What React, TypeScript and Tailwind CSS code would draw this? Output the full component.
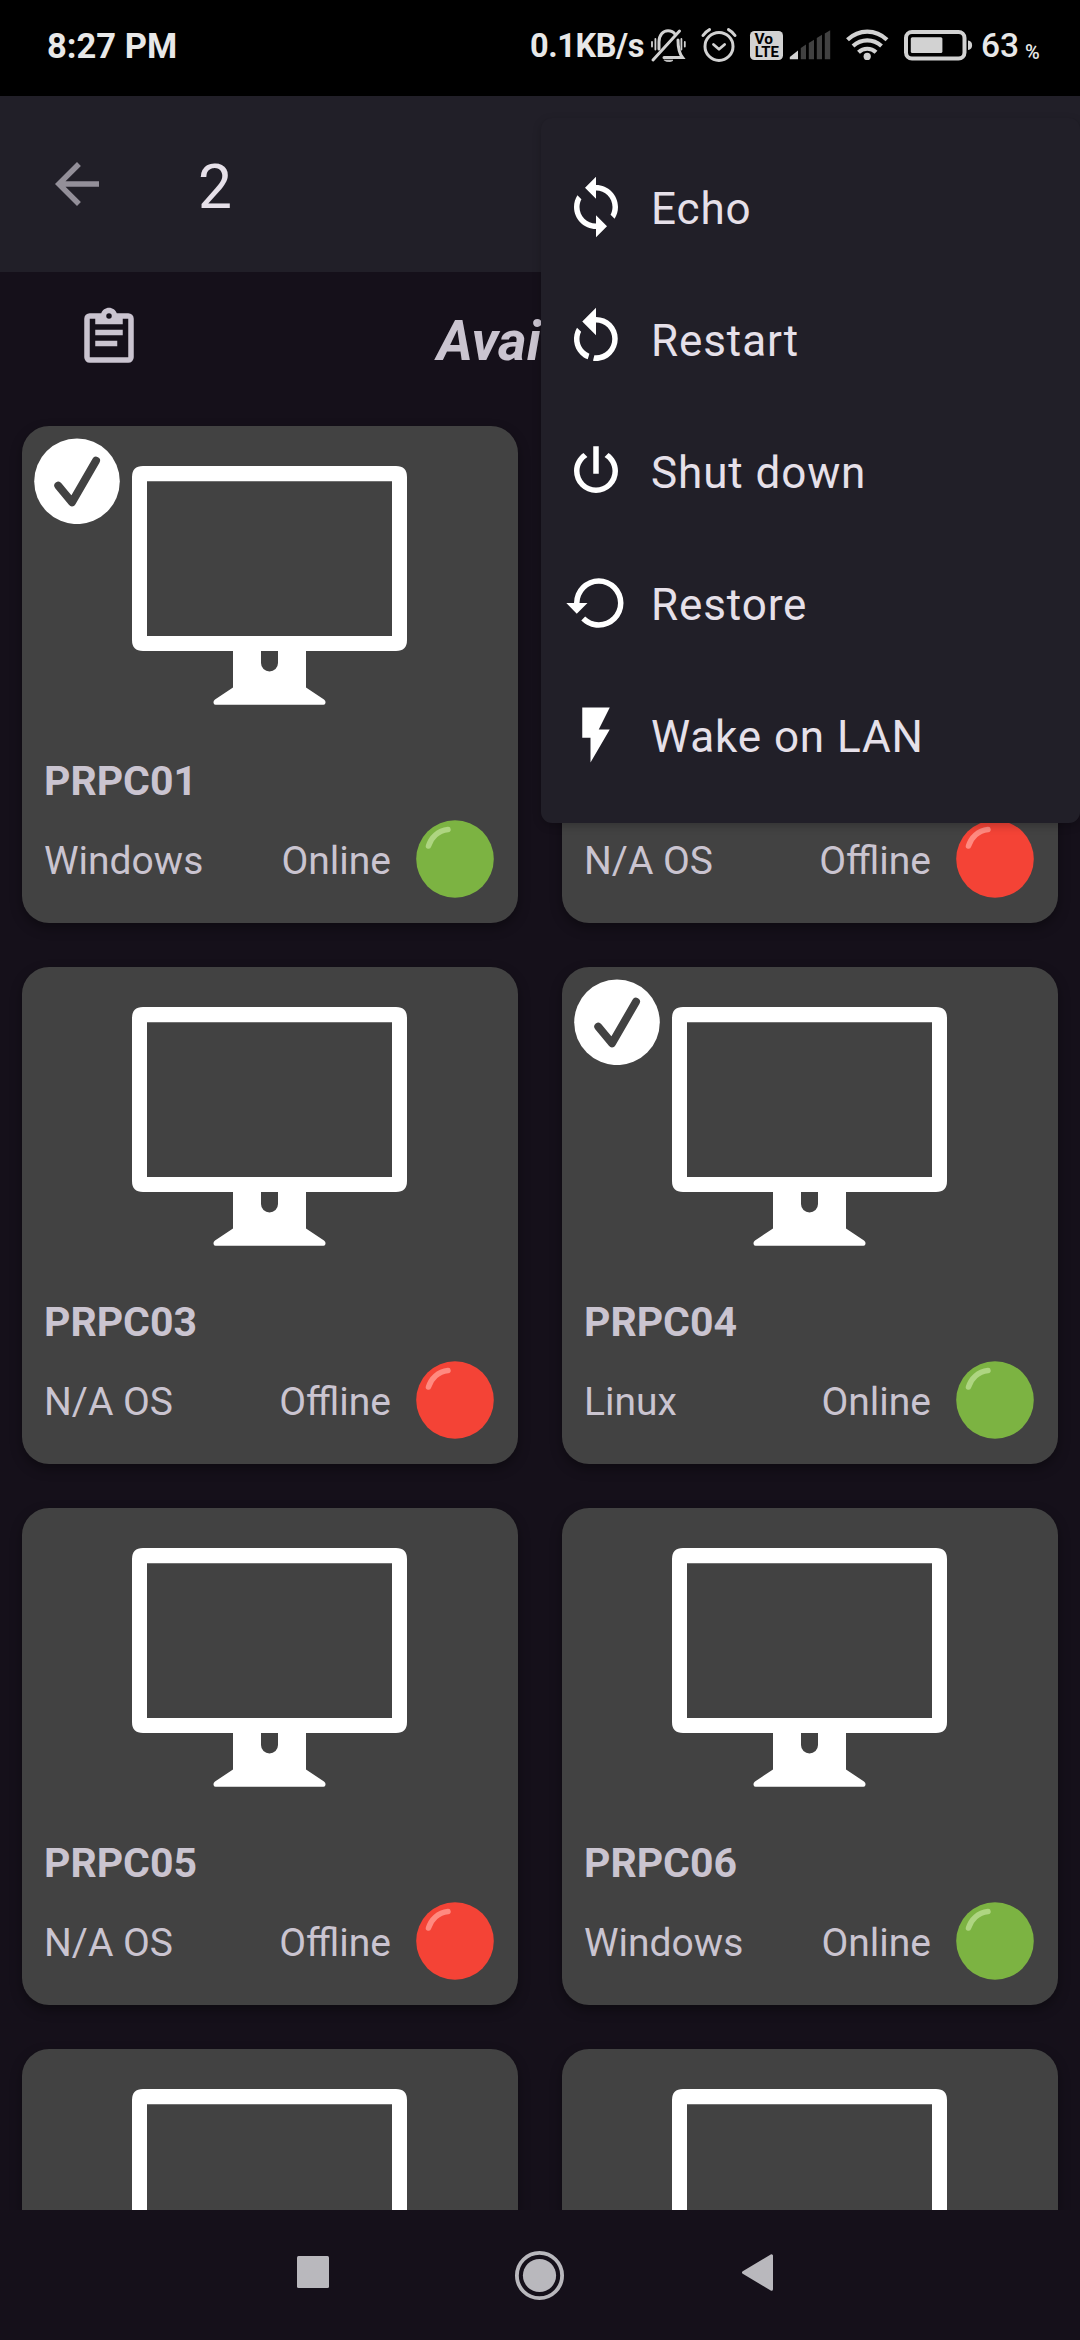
type Computer = {
  id: number;
  selected?: boolean;
  details?: { name: string; os: string; online: boolean };
};

const computers: Computer[] = [
  { id: 1, selected: true, details: { name: "PRPC01", os: "Windows", online: true } },
  { id: 2, details: { name: "PRPC02", os: "N/A OS", online: false } },
  { id: 3, details: { name: "PRPC03", os: "N/A OS", online: false } },
  { id: 4, selected: true, details: { name: "PRPC04", os: "Linux", online: true } },
  { id: 5, details: { name: "PRPC05", os: "N/A OS", online: false } },
  { id: 6, details: { name: "PRPC06", os: "Windows", online: true } },
  { id: 7 },
  { id: 8 },
];

const icons = {
  back: "M20 11H7.83l5.59-5.59L12 4l-8 8 8 8 1.41-1.41L7.83 13H20v-2z",
  clipboard:
    "M19,3H14.82C14.4,1.84 13.3,1 12,1C10.7,1 9.6,1.84 9.18,3H5A2,2 0 0,0 3,5V19A2,2 0 0,0 5,21H19A2,2 0 0,0 21,19V5A2,2 0 0,0 19,3M12,3A1,1 0 0,1 13,4A1,1 0 0,1 12,5A1,1 0 0,1 11,4A1,1 0 0,1 12,3M7,7H17V5H19V19H5V5H7V7M17,11H7V9H17V11M15,15H7V13H15V15Z",
  sync: "M12 4V1L8 5l4 4V6c3.31 0 6 2.69 6 6 0 1.01-.25 1.97-.7 2.8l1.46 1.46C19.54 15.03 20 13.57 20 12c0-4.42-3.58-8-8-8zm0 14c-3.31 0-6-2.69-6-6 0-1.01.25-1.97.7-2.8L5.24 7.74C4.46 8.97 4 10.43 4 12c0 4.42 3.58 8 8 8v3l4-4-4-4v3z",
  restart:
    "M12,4C14.1,4 16.1,4.8 17.6,6.3C20.7,9.4 20.7,14.5 17.6,17.6C15.8,19.5 13.3,20.2 10.9,19.9L11.4,17.9C13.1,18.1 14.9,17.5 16.2,16.2C18.5,13.9 18.5,10.1 16.2,7.7C15.1,6.6 13.5,6 12,6V10.6L7,5.6L12,0.6V4M6.3,17.6C3.7,15 3.3,11 5.1,7.9L6.6,9.4C5.5,11.6 5.9,14.4 7.8,16.2C8.3,16.7 8.9,17.1 9.6,17.4L9,19.4C8,19 7.1,18.4 6.3,17.6Z",
  power:
    "M16.56,5.44L15.11,6.89C16.84,7.94 18,9.83 18,12A6,6 0 0,1 12,18A6,6 0 0,1 6,12C6,9.83 7.16,7.94 8.88,6.88L7.44,5.44C5.36,6.88 4,9.28 4,12A8,8 0 0,0 12,20A8,8 0 0,0 20,12C20,9.28 18.64,6.88 16.56,5.44M13,3H11V13H13",
  restore:
    "M13,3A9,9 0 0,0 4,12H1.2L5,15.9L8.9,12H6A7,7 0 0,1 13,5A7,7 0 0,1 20,12A7,7 0 0,1 13,19C11.07,19 9.32,18.21 8.06,16.94L6.64,18.36C8.27,20 10.5,21 13,21A9,9 0 0,0 22,12A9,9 0 0,0 13,3Z",
  flash: "M7,2V13H10V22L17,10H13L17,2H7Z",
};

const menuItems = [
  { label: "Echo", icon: icons.sync },
  { label: "Restart", icon: icons.restart },
  { label: "Shut down", icon: icons.power },
  { label: "Restore", icon: icons.restore },
  { label: "Wake on LAN", icon: icons.flash },
];

function Icon({ path, className }: { path: string; className?: string }) {
  return (
    <svg viewBox="0 0 24 24" className={`size-[66px] shrink-0 fill-current ${className ?? ""}`}>
      <path d={path} />
    </svg>
  );
}

function StatusIcons() {
  return (
    <svg width="328" height="96" viewBox="648 0 328 96" className="shrink-0" fill="none" stroke="#d2d2d2">
      {/* muted bell */}
      <g strokeWidth="3" strokeLinecap="round">
        <path d="M659 49V42C659 35 663 30.800 668 30.800C671 30.800 673.500 32 675 34.200" />
        <path d="M678 40C678 48 679 53 682.500 57.500H664" />
        <path d="M679.500 31L653 60" />
        <path d="M652 42V46.500M655.400 39V49.500M681.400 39V49.500M684.800 42V46.500" strokeWidth="1.800" />
        <path d="M664.500 60.200H673C672 62 665.500 62 664.500 60.200Z" fill="#d2d2d2" strokeWidth="0.800" />
      </g>
      {/* alarm clock */}
      <circle cx="719" cy="46.400" r="14" strokeWidth="3" />
      <path d="M713.500 44.500L719 49.200L724.600 44.500" strokeWidth="2.800" strokeLinecap="round" strokeLinejoin="round" />
      <path d="M703 35.500C704.500 33 707 31 709.500 29.600M735 35.500C733.500 33 731 31 728.500 29.600" strokeWidth="3" strokeLinecap="round" />
      {/* volte badge */}
      <rect x="750" y="31" width="33" height="29" rx="4.500" fill="#d2d2d2" stroke="none" />
      <g fill="#000" stroke="none" fontFamily="Roboto" fontWeight="700" fontSize="14">
        <text x="754.600" y="43.800" textLength="18.500" lengthAdjust="spacingAndGlyphs">Vo</text>
        <text x="754.800" y="56.800" textLength="24" lengthAdjust="spacingAndGlyphs">LTE</text>
      </g>
      {/* signal */}
      <g stroke="none" fill="#414141">
        <path d="M789.800 59.300V57L798 50.600V59.300Z" fill="#d2d2d2" />
        <path d="M800.800 59.300V48L806 44.500V59.300Z" />
        <path d="M808.800 59.300V43L814 39.800V59.300Z" />
        <path d="M816.800 59.300V38L822 34.800V59.300Z" />
        <path d="M824.800 59.300V33.500L830.200 30.200V59.300Z" />
      </g>
      {/* wifi */}
      <g strokeWidth="4.200">
        <path d="M847.500 39.800C859 29 875.500 29 887 39.800" />
        <path d="M853 46C861.500 38.600 873 38.600 881.500 46" />
        <path d="M858.500 52.200C863.500 47.600 871 47.600 876 52.200" />
        <circle cx="867.200" cy="56.400" r="3.600" fill="#d2d2d2" stroke="none" />
      </g>
      {/* battery */}
      <rect x="906" y="32" width="58.500" height="26.500" rx="6" strokeWidth="4" />
      <rect x="910.800" y="37.200" width="31.600" height="15.800" rx="1.500" fill="#d2d2d2" stroke="none" />
      <path d="M968 40.500C973.500 40.500 973.500 50 968 50Z" fill="#d2d2d2" stroke="none" />
    </svg>
  );
}

function StatusBar() {
  return (
    <div className="flex h-24 shrink-0 items-center bg-black pl-[47px] text-[#e8e8e8]">
      <span className="mb-1 w-[483px] text-[34.5px] font-bold leading-none">8:27 PM</span>
      <span className="mb-1 w-[118px] whitespace-nowrap text-[32.5px] font-bold leading-none tracking-[-0.4px]">
        0.1KB/s
      </span>
      <StatusIcons />
      <span className="mb-1 ml-[5px] w-[44px] text-[33.5px] font-medium leading-none">63</span>
      <span className="mt-2 text-[20px] font-medium leading-none">%</span>
    </div>
  );
}

function Monitor() {
  return (
    <svg width="496" height="285" viewBox="0 0 496 285" className="shrink-0">
      <path
        fill="#fff"
        fillRule="evenodd"
        d="M121 40H374Q385 40 385 51V214Q385 225 374 225H284V261.500L302 273.500Q303.500 274.500 303.500 276V276.500Q303.500 278.800 301.500 278.800H193.500Q191.500 278.800 191.500 276.500V276Q191.500 274.500 193 273.500L211 261.500V225H121Q110 225 110 214V51Q110 40 121 40ZM125 55.300V210H370V55.300ZM239 225V237A8.500 8.500 0 0 0 256 237V225Z"
      />
    </svg>
  );
}

function StatusDot({ online }: { online: boolean }) {
  return (
    <svg width="78" height="78" viewBox="0 0 78 78" className="shrink-0">
      <circle cx="39" cy="39" r="38.800" className={online ? "fill-[#7cb342]" : "fill-[#f44336]"} />
      <path
        d="M12.500 26C15 17.500 22 10.500 32 9.500"
        fill="none"
        strokeWidth="5.500"
        strokeLinecap="round"
        className={online ? "stroke-[#aed581]" : "stroke-[#ff8a80]"}
      />
    </svg>
  );
}

function ComputerCard({ selected, details }: Computer) {
  return (
    <article className="relative flex h-[497px] w-[496px] flex-col rounded-[27px] bg-[#424242] text-[#cac4d0] shadow-[0_5px_12px_rgba(0,0,0,0.35)]">
      {selected && (
        <svg width="86" height="86" viewBox="0 0 86 86" className="absolute left-3 top-3">
          <circle cx="43" cy="43.300" r="42.800" fill="#fff" />
          <path
            d="M24.300 47.700L38 64.300L62 22.700"
            fill="none"
            stroke="#424242"
            strokeWidth="8"
            strokeLinecap="round"
            strokeLinejoin="round"
          />
        </svg>
      )}
      <Monitor />
      {details && (
        <>
          <h2 className="mt-[46px] pl-[22px] text-[41px] font-bold leading-[48px]">{details.name}</h2>
          <div className="mt-[15px] flex h-[78px] items-center pl-[22px] pr-6 text-[39px]">
            <span className="grow pt-[5px]">{details.os}</span>
            <span className="pr-[25px] pt-[5px]">{details.online ? "Online" : "Offline"}</span>
            <StatusDot online={details.online} />
          </div>
        </>
      )}
    </article>
  );
}

function ActionMenu() {
  return (
    <ul className="absolute left-[541px] top-[118px] flex h-[705px] w-[539px] flex-col rounded-[11px] bg-[#211f28] py-[22px] shadow-[0_3px_9px_rgba(0,0,0,0.22)]">
      {menuItems.map((item) => (
        <li key={item.label} className="flex h-[132px] items-center gap-[22px] pl-[22px] pt-[2px]">
          <Icon path={item.icon} className="text-white" />
          <span className="pt-[4px] text-[44px] tracking-[0.9px] text-[#e6e0e9]">{item.label}</span>
        </li>
      ))}
    </ul>
  );
}

export default function App() {
  return (
    <div className="relative flex h-[2340px] w-[1080px] flex-col overflow-hidden bg-[#15101a] font-['Roboto',sans-serif]">
      <StatusBar />
      <header className="flex h-[176px] shrink-0 items-center bg-[#211f28] pl-11">
        <Icon path={icons.back} className="text-[#938f99]" />
        <span className="ml-[88px] pt-[8px] text-[60.5px] leading-none text-[#e6e0e9]">2</span>
      </header>
      <main className="h-[1938px] shrink-0 overflow-hidden">
        <div className="flex h-[154px] items-start pl-[76px] pt-[33px] text-[#cac4d0]">
          <Icon path={icons.clipboard} />
          <h1 className="ml-[295px] pt-[4px] text-[55px] font-bold italic leading-[64px]">Available</h1>
        </div>
        <div className="grid grid-cols-[496px_496px] gap-11 px-[22px]">
          {computers.map((computer) => (
            <ComputerCard key={computer.id} {...computer} />
          ))}
        </div>
      </main>
      <nav className="flex grow items-start text-[#b9b8bd]">
        <svg width="1080" height="130" viewBox="0 2210 1080 130" fill="currentColor">
          <rect x="297" y="2256" width="32" height="32" rx="1.500" />
          <circle cx="539.500" cy="2275.500" r="22.600" fill="none" stroke="currentColor" strokeWidth="3.800" />
          <circle cx="539.500" cy="2275.500" r="16.600" />
          <path d="M743.500 2272.500L771.500 2255.800V2289.200Z" stroke="currentColor" strokeWidth="3" strokeLinejoin="round" />
        </svg>
      </nav>
      <ActionMenu />
    </div>
  );
}
